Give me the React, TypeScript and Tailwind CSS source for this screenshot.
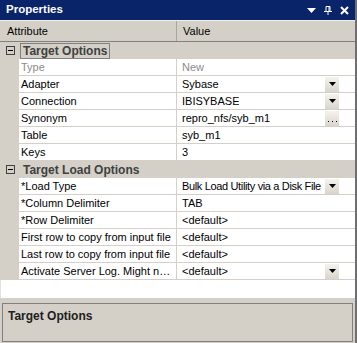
import React from "react";

type Row = { name: string; value: string; disabled?: boolean; btn?: "drop" | "dots"; tight?: boolean };

const g1: Row[] = [
  { name: "Type", value: "New", disabled: true },
  { name: "Adapter", value: "Sybase", btn: "drop" },
  { name: "Connection", value: "IBISYBASE", btn: "drop" },
  { name: "Synonym", value: "repro_nfs/syb_m1", btn: "dots" },
  { name: "Table", value: "syb_m1" },
  { name: "Keys", value: "3" },
];

const g2: Row[] = [
  { name: "*Load Type", value: "Bulk Load Utility via a Disk File", btn: "drop", tight: true },
  { name: "*Column Delimiter", value: "TAB" },
  { name: "*Row Delimiter", value: "<default>" },
  { name: "First row to copy from input file", value: "<default>" },
  { name: "Last row to copy from input file", value: "<default>" },
  { name: "Activate Server Log. Might n…", value: "<default>", btn: "drop" },
];

function DropBtn() {
  return (
    <div className="w-[14px] h-[15px] shrink-0 bg-gradient-to-b from-[#f4f3ee] to-[#d8d5cc] flex items-center justify-center">
      <svg width="7" height="4" viewBox="0 0 7 4">
        <path d="M0 0H7L3.5 4Z" fill="#000" />
      </svg>
    </div>
  );
}

function DotsBtn() {
  return (
    <div className="w-[14px] h-[15px] shrink-0 bg-gradient-to-b from-[#f4f3ee] to-[#d8d5cc] flex items-end justify-center pb-[3px]">
      <svg width="9" height="2" viewBox="0 0 9 2">
        <rect x="0" y="0" width="1" height="1" fill="#000" />
        <rect x="4" y="0" width="1" height="1" fill="#000" />
        <rect x="8" y="0" width="1" height="1" fill="#000" />
      </svg>
    </div>
  );
}

function GridRow({ r }: { r: Row }) {
  return (
    <div className="flex h-[17px]">
      <div className="w-[19px] shrink-0 bg-[#d4d0c8]" />
      <div className="flex flex-1 min-w-0 bg-white border-b border-[#d4d0c8]">
        <div
          className={`w-[158px] shrink-0 pl-[2px] border-r border-[#d4d0c8] flex items-center whitespace-nowrap overflow-hidden ${
            r.disabled ? "text-[#8c8c8c]" : "text-black"
          }`}
        >
          {r.name}
        </div>
        <div
          className={`flex-1 min-w-0 pl-[5px] pr-[16px] flex items-center justify-between gap-[3px] whitespace-nowrap ${
            r.disabled ? "text-[#8c8c8c]" : "text-black"
          }`}
        >
          <span className={`overflow-hidden ${r.tight ? "tracking-[-0.35px]" : ""}`}>{r.value}</span>
          {r.btn === "drop" && <DropBtn />}
          {r.btn === "dots" && <DotsBtn />}
        </div>
      </div>
    </div>
  );
}

function GroupRow({ title, focused }: { title: string; focused?: boolean }) {
  return (
    <div className="flex h-[17px] items-center bg-[#d4d0c8]">
      <div className="w-[19px] shrink-0 flex items-center justify-center pl-[2px]">
        <div className="w-[9px] h-[9px] border border-[#404040] bg-[#d4d0c8] flex items-center justify-center">
          <div className="w-[5px] h-px bg-black" />
        </div>
      </div>
      <div
        className={`ml-[1px] px-[2px] h-[16px] flex items-center font-bold text-[12px] text-[#404040] ${
          focused ? "border border-[#808080]" : "border border-transparent"
        }`}
      >
        {title}
      </div>
    </div>
  );
}

export default function App() {
  return (
    <div className="w-[357px] h-[343px] bg-[#d4d0c8] flex flex-col text-[11px] leading-none font-[family-name:'Liberation_Sans',Arial,sans-serif] overflow-hidden border-r-2 border-[#6f6f6f]">
      <div className="h-[20px] shrink-0 bg-[#0a246a] flex items-center justify-between pl-[6px] pr-[6px] text-white font-bold text-[11.5px]">
        <span>Properties</span>
        <div className="flex items-center gap-[8px]">
          <svg width="9" height="5" viewBox="0 0 9 5">
            <path d="M0 0H9L4.5 5Z" fill="#fff" />
          </svg>
          <svg width="8" height="9" viewBox="0 0 8 9">
            <path d="M2 0.5H6M2 0.5V5M6 0.5V5M5 0.5V5M0 5.5H8M4 5.5V9" stroke="#fff" strokeWidth="1" fill="none" />
          </svg>
          <svg width="9" height="9" viewBox="0 0 9 9">
            <path d="M1 1L8 8M8 1L1 8" stroke="#fff" strokeWidth="2" />
          </svg>
        </div>
      </div>
      <div className="h-px shrink-0 bg-[#f0efe9]" />
      <div className="flex h-[21px] shrink-0 border-b border-[#808080] bg-[#d4d0c8]">
        <div className="w-[177px] shrink-0 pl-[7px] flex items-center border-r border-[#a9a69e]">Attribute</div>
        <div className="flex-1 pl-[6px] flex items-center">Value</div>
      </div>
      <div className="flex flex-col shrink-0">
        <GroupRow title="Target Options" focused />
        {g1.map((r) => (
          <GridRow key={r.name} r={r} />
        ))}
        <GroupRow title="Target Load Options" />
        {g2.map((r) => (
          <GridRow key={r.name} r={r} />
        ))}
      </div>
      <div className="h-[18px] shrink-0 bg-white border-l border-[#e4e2dc]" />
      <div className="h-[5px] shrink-0" />
      <div className="mx-[2px] h-[39px] shrink-0 border border-[#808080] bg-[#d4d0c8] pl-[5px] pt-[6px] font-bold text-[12px] text-[#202020]">
        Target Options
      </div>
    </div>
  );
}
